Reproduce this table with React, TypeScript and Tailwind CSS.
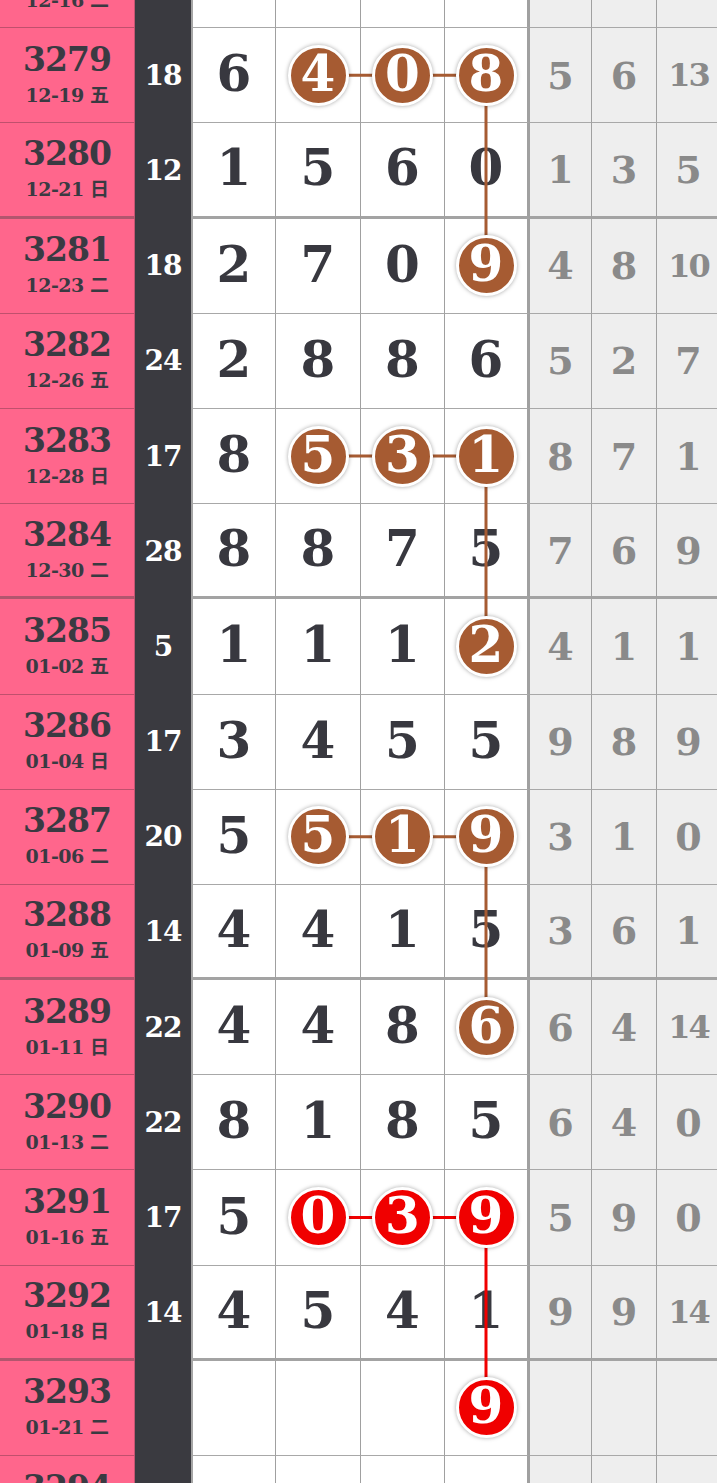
type Row = {
  issue: string;
  date: string;
  sum: string;
  digits: string[];
  gaps: string[];
  hits?: number[];
  tone?: "brown" | "red";
};

const rows: Row[] = [
  { issue: "3278", date: "12-16 二", sum: "", digits: ["", "", "", ""], gaps: ["", "", ""] },
  { issue: "3279", date: "12-19 五", sum: "18", digits: ["6", "4", "0", "8"], gaps: ["5", "6", "13"], hits: [1, 2, 3], tone: "brown" },
  { issue: "3280", date: "12-21 日", sum: "12", digits: ["1", "5", "6", "0"], gaps: ["1", "3", "5"] },
  { issue: "3281", date: "12-23 二", sum: "18", digits: ["2", "7", "0", "9"], gaps: ["4", "8", "10"], hits: [3], tone: "brown" },
  { issue: "3282", date: "12-26 五", sum: "24", digits: ["2", "8", "8", "6"], gaps: ["5", "2", "7"] },
  { issue: "3283", date: "12-28 日", sum: "17", digits: ["8", "5", "3", "1"], gaps: ["8", "7", "1"], hits: [1, 2, 3], tone: "brown" },
  { issue: "3284", date: "12-30 二", sum: "28", digits: ["8", "8", "7", "5"], gaps: ["7", "6", "9"] },
  { issue: "3285", date: "01-02 五", sum: "5", digits: ["1", "1", "1", "2"], gaps: ["4", "1", "1"], hits: [3], tone: "brown" },
  { issue: "3286", date: "01-04 日", sum: "17", digits: ["3", "4", "5", "5"], gaps: ["9", "8", "9"] },
  { issue: "3287", date: "01-06 二", sum: "20", digits: ["5", "5", "1", "9"], gaps: ["3", "1", "0"], hits: [1, 2, 3], tone: "brown" },
  { issue: "3288", date: "01-09 五", sum: "14", digits: ["4", "4", "1", "5"], gaps: ["3", "6", "1"] },
  { issue: "3289", date: "01-11 日", sum: "22", digits: ["4", "4", "8", "6"], gaps: ["6", "4", "14"], hits: [3], tone: "brown" },
  { issue: "3290", date: "01-13 二", sum: "22", digits: ["8", "1", "8", "5"], gaps: ["6", "4", "0"] },
  { issue: "3291", date: "01-16 五", sum: "17", digits: ["5", "0", "3", "9"], gaps: ["5", "9", "0"], hits: [1, 2, 3], tone: "red" },
  { issue: "3292", date: "01-18 日", sum: "14", digits: ["4", "5", "4", "1"], gaps: ["9", "9", "14"] },
  { issue: "3293", date: "01-21 二", sum: "", digits: ["", "", "", "9"], gaps: ["", "", ""], hits: [3], tone: "red" },
  { issue: "3294", date: "01-23 五", sum: "", digits: ["", "", "", ""], gaps: ["", "", ""] },
];

const ROW_H = 95.2;
const colX = [234.5, 318.5, 403, 486];
const toneColor = { brown: "#a65b32", red: "#f00000" };

// vertical links: [fromRow, toRow, tone]
const drops: [number, number, "brown" | "red"][] = [
  [1, 3, "brown"],
  [5, 7, "brown"],
  [9, 11, "brown"],
  [13, 15, "red"],
];

const serif = "font-['DejaVu_Serif','Noto_Sans_CJK_SC',serif] font-bold";

const Ball = ({ n, tone }: { n: string; tone: "brown" | "red" }) => (
  <div
    className={`relative z-10 w-[61px] h-[61px] rounded-full border-[3px] border-white shadow-[0_0_4px_rgba(0,0,0,0.35)] flex items-center justify-center text-white text-[50px] leading-none ${
      tone === "red" ? "bg-[#f00000]" : "bg-[#a65b32]"
    }`}
  >
    <span className="mt-[-3px]">{n}</span>
  </div>
);

const Links = () => {
  const cy = (i: number) => i * ROW_H + 47;
  return (
    <svg className="absolute left-0 top-0 z-[5] pointer-events-none" width={717} height={rows.length * ROW_H}>
      {rows.map((r, i) =>
        r.hits && r.hits.length > 1 ? (
          <line
            key={"h" + i}
            x1={colX[r.hits[0]]}
            x2={colX[r.hits[r.hits.length - 1]]}
            y1={cy(i)}
            y2={cy(i)}
            stroke={toneColor[r.tone!]}
            strokeWidth={3}
          />
        ) : null
      )}
      {drops.map(([a, b, t]) => (
        <line key={"v" + a} x1={colX[3]} x2={colX[3]} y1={cy(a)} y2={cy(b)} stroke={toneColor[t]} strokeWidth={3} />
      ))}
    </svg>
  );
};

export default function App() {
  return (
    <div className={`w-[717px] h-[1483px] overflow-hidden bg-white ${serif}`}>
      <div className="relative mt-[-67px]">
        <Links />
        {rows.map((r, i) => {
          const thick = Number(r.issue) % 4 === 0;
          const lineW = thick ? "border-b-[3px] border-b-[#a3a3a3]" : "border-b border-b-[#a8a8a8]";
          const pinkLine = thick ? "border-b-[3px] border-b-[#b2566e]" : "border-b border-b-[#c0506d]";
          return (
            <div key={r.issue} className="flex h-[95.2px]">
              <div
                className={`w-[135px] shrink-0 bg-[#ff668c] border-r border-r-[#c45572] ${pinkLine} flex flex-col items-center justify-center text-[#3a3a42]`}
              >
                <span className="text-[33px] leading-[36px] tracking-[-1px] mt-[-2px]">{r.issue}</span>
                <span className="text-[19px] leading-[24px] mt-[5px] tracking-[-0.5px]">{r.date}</span>
              </div>
              <div className="w-[58px] shrink-0 bg-[#3a3a40] border-r-2 border-r-[#a5a5a5] flex items-center justify-center text-white text-[28px] tracking-[-1px]">
                {r.sum}
              </div>
              {r.digits.map((d, c) => {
                const w = ["w-[83px]", "w-[85px]", "w-[84px]", "w-[85px]"][c];
                const right = c === 3 ? "border-r-[3px] border-r-[#a0a0a0]" : "border-r border-r-[#a0a0a0]";
                const hit = r.hits?.includes(c);
                return (
                  <div
                    key={c}
                    className={`${w} shrink-0 ${right} ${lineW} flex items-center justify-center text-[#38383f] text-[50px] leading-none`}
                  >
                    {hit ? <Ball n={d} tone={r.tone!} /> : <span className="mt-[-2px]">{d}</span>}
                  </div>
                );
              })}
              {r.gaps.map((g, c) => (
                <div
                  key={"g" + c}
                  className={`${["w-[62px]", "w-[65px]", "w-[64px]"][c]} shrink-0 bg-[#eeeeee] border-r border-r-[#a0a0a0] ${lineW} flex items-center justify-center text-[#8a8a8a] ${
                    g.length > 1 ? "text-[32px] tracking-[-2px]" : "text-[38px]"
                  }`}
                >
                  {g}
                </div>
              ))}
            </div>
          );
        })}
      </div>
    </div>
  );
}
